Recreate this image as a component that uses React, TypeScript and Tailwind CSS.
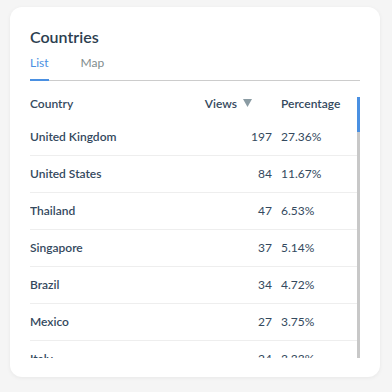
const ROWS = [
  { c: "United Kingdom", v: 197, p: "27.36%" },
  { c: "United States", v: 84, p: "11.67%" },
  { c: "Thailand", v: 47, p: "6.53%" },
  { c: "Singapore", v: 37, p: "5.14%" },
  { c: "Brazil", v: 34, p: "4.72%" },
  { c: "Mexico", v: 27, p: "3.75%" },
  { c: "Italy", v: 24, p: "3.33%" },
];

export default function App() {
  return (
    <div className="h-[392px] w-[392px] bg-[#f5f5f5] pl-[10px] pt-[7px] font-['Lato',sans-serif]">
      <div className="h-[370px] w-[370px] rounded-[12px] bg-white px-5 pt-[20px] shadow-[0_1px_4px_rgba(0,0,0,0.06)]">
        <h2 className="text-[16px] font-semibold leading-[20px] text-[#2c3e50]">Countries</h2>
        <div className="mt-[8px] flex border-b border-[#cccccc] text-[12px] leading-[16px]">
          <div className="-mb-px border-b-2 border-[#4a90e2] pb-[8px] text-[#4a90e2]">List</div>
          <div className="ml-[32px] pb-[8px] text-[#7f8c8d]">Map</div>
        </div>
        <div className="mt-[16px] flex h-[261px]">
          <div className="flex-1 overflow-hidden text-[12px] text-[#34495e]">
            <div className="flex h-[14px] items-center font-semibold">
              <div className="w-[162px]">Country</div>
              <div className="flex w-[80px] items-center justify-end pr-[20px]">
                Views
                <svg width="9" height="8" viewBox="0 0 9 8" className="ml-[6px] -mt-[3px]">
                  <path d="M0 0H9L4.5 8Z" fill="#8a9ba3" />
                </svg>
              </div>
              <div className="pl-[9px]">Percentage</div>
            </div>
            <div className="mt-[8px]">
              {ROWS.map(r => (
                <div key={r.c} className="flex h-[37px] items-center border-b border-[#eeeeee]">
                  <div className="w-[162px] font-semibold">{r.c}</div>
                  <div className="w-[80px] text-right">{r.v}</div>
                  <div className="pl-[9px]">{r.p}</div>
                </div>
              ))}
            </div>
          </div>
          <div className="flex w-[3px] flex-col bg-[#c8c8c8]">
            <div className="h-[35px] bg-[#4a90e2]" />
          </div>
        </div>
      </div>
    </div>
  );
}
